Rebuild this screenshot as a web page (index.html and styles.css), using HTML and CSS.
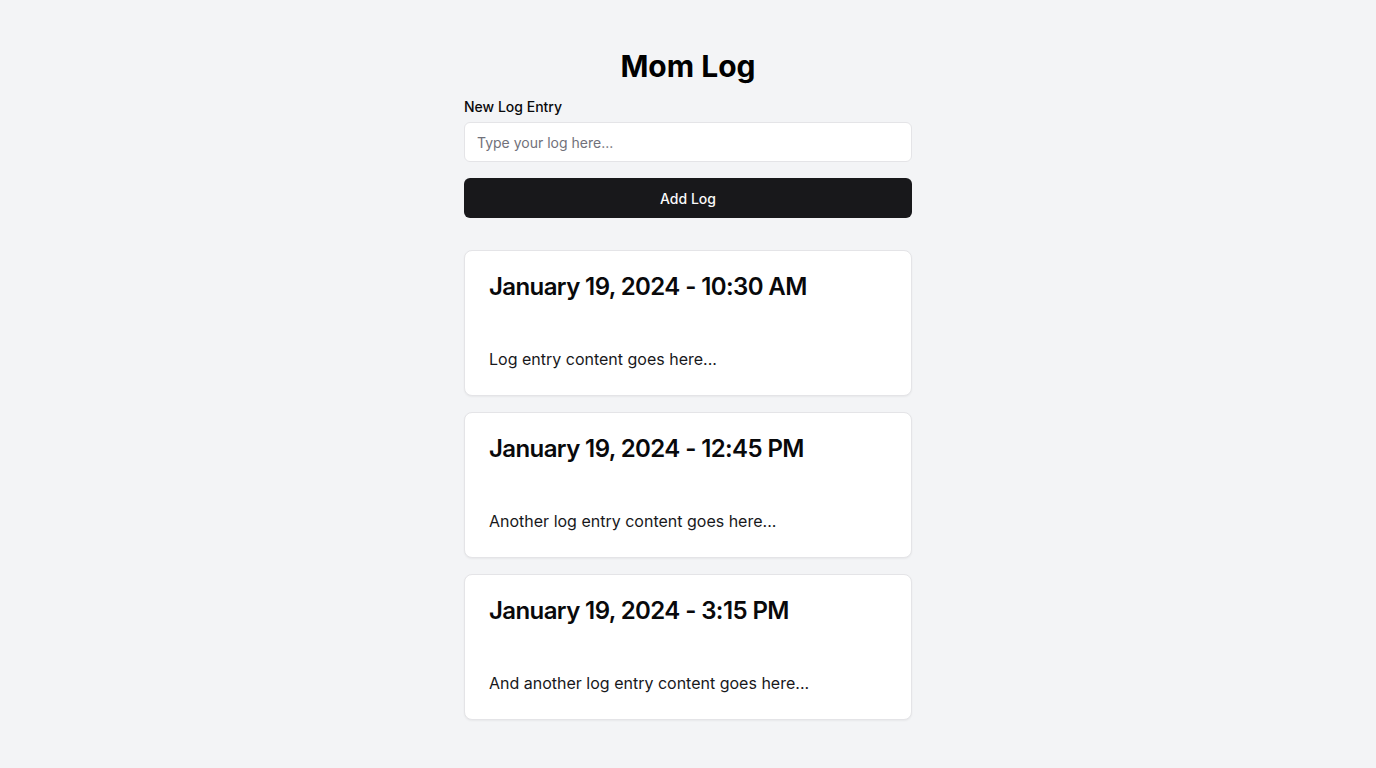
FILE: index.html
```html
<!DOCTYPE html>
<html lang="en">
<head>
<meta charset="utf-8">
<title>Mom Log</title>
<link rel="stylesheet" href="styles.css">
</head>
<body>
<main class="page">
  <div class="container">
    <h1 class="title">Mom Log</h1>
    <form class="form" onsubmit="return false;">
      <div class="field">
        <label class="label" for="log">New Log Entry</label>
        <input class="input" id="log" type="text" placeholder="Type your log here...">
      </div>
      <button class="button" type="submit">Add Log</button>
    </form>
    <div class="list">
      <div class="card">
        <div class="card-header"><h3 class="card-title">January 19, 2024 - 10:30 AM</h3></div>
        <div class="card-content"><p>Log entry content goes here...</p></div>
      </div>
      <div class="card">
        <div class="card-header"><h3 class="card-title">January 19, 2024 - 12:45 PM</h3></div>
        <div class="card-content"><p>Another log entry content goes here...</p></div>
      </div>
      <div class="card">
        <div class="card-header"><h3 class="card-title">January 19, 2024 - 3:15 PM</h3></div>
        <div class="card-content"><p>And another log entry content goes here...</p></div>
      </div>
    </div>
  </div>
</main>
</body>
</html>
```
FILE: styles.css
```css
* { box-sizing: border-box; }
html, body { margin: 0; padding: 0; }
body {
  background: #f3f4f6;
  font-family: Inter, "Liberation Sans", sans-serif;
  color: #09090b;
  min-height: 768px;
}
.page {
  display: flex;
  justify-content: center;
  padding: 48px 16px;
}
.container {
  width: 448px;
  display: flex;
  flex-direction: column;
}
.title {
  margin: 0 0 16px;
  font-size: 30px;
  line-height: 36px;
  font-weight: 700;
  text-align: center;
  color: #000;
}
.form {
  display: flex;
  flex-direction: column;
  gap: 16px;
}
.field {
  display: flex;
  flex-direction: column;
  gap: 8px;
}
.label {
  font-size: 14px;
  line-height: 14px;
  font-weight: 500;
  color: #09090b;
}
.input {
  height: 40px;
  width: 100%;
  border: 1px solid #e4e4e7;
  border-radius: 6px;
  background: #fff;
  padding: 8px 12px;
  font-family: inherit;
  font-size: 14px;
  color: #09090b;
  outline: none;
}
.input::placeholder { color: #71717a; }
.button {
  height: 40px;
  width: 100%;
  border: none;
  border-radius: 6px;
  background: #18181b;
  color: #fafafa;
  font-family: inherit;
  font-size: 14px;
  font-weight: 500;
  cursor: pointer;
}
.list {
  margin-top: 32px;
  display: flex;
  flex-direction: column;
  gap: 16px;
}
.card {
  background: #fff;
  border: 1px solid #e4e4e7;
  border-radius: 8px;
  box-shadow: 0 1px 2px rgba(0,0,0,0.05);
}
.card-header {
  padding: 24px;
}
.card-title {
  margin: 0;
  font-size: 24px;
  line-height: 24px;
  font-weight: 600;
  letter-spacing: -0.6px;
  color: #09090b;
}
.card-content {
  padding: 24px;
}
.card-content p {
  margin: 0;
  font-size: 16px;
  line-height: 24px;
  color: #18181b;
}
```
